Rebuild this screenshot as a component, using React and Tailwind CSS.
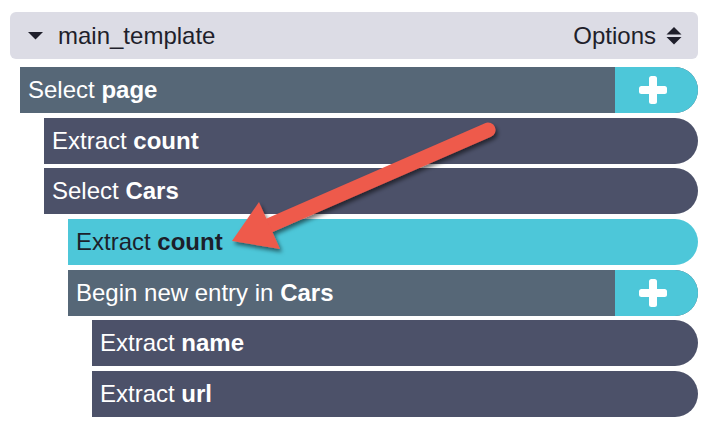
import React from "react";

const Plus = () => (
  <svg width="30" height="30" viewBox="0 0 30 30">
    <rect x="11" y="1" width="8" height="28" rx="2.5" fill="#fff" />
    <rect x="1" y="11" width="28" height="8" rx="2.5" fill="#fff" />
  </svg>
);

function Row({ indent, label, bold, variant, plus }) {
  const bg =
    variant === "teal"
      ? "bg-[#4dc7d9] text-[#1c1f2b]"
      : variant === "slate"
      ? "bg-[#566777] text-white"
      : "bg-[#4c5169] text-white";
  return (
    <div className={`flex h-[46px] ${indent} rounded-l-[5px] rounded-r-full overflow-hidden ${bg}`}>
      <div className="flex-1 flex items-center pl-2 text-[24px] leading-none">
        <span>{label}&nbsp;</span>
        <span className="font-bold">{bold}</span>
      </div>
      {plus && (
        <div className="w-[83px] bg-[#4dc7d9] flex items-center pl-[23px]">
          <Plus />
        </div>
      )}
    </div>
  );
}

export default function App() {
  return (
    <div
      className="relative w-[718px] h-[444px] bg-white overflow-hidden"
      style={{ fontFamily: '"Liberation Sans", Arial, sans-serif' }}
    >
      <div className="ml-[10px] mt-[12px] w-[688px]">
        <div className="h-[47px] rounded-[6px] bg-[#dcdce5] flex items-center pl-[18px] pr-[16px] text-[#1f1f2b]">
          <svg width="15" height="8" viewBox="0 0 15 8">
            <polygon points="0,0 15,0 7.5,7.5" fill="#1f1f2b" />
          </svg>
          <span className="ml-[15px] text-[24px] leading-none">main_template</span>
          <span className="ml-auto text-[24px] leading-none">Options</span>
          <svg className="ml-[10px]" width="16" height="18" viewBox="0 0 16 18">
            <polygon points="8,0 15.5,7.5 0.5,7.5" fill="#1f1f2b" />
            <polygon points="0.5,10 15.5,10 8,17.5" fill="#1f1f2b" />
          </svg>
        </div>
        <div className="mt-[8px] pl-[10px] flex flex-col gap-[4.67px]">
          <Row indent="ml-0" label="Select" bold="page" variant="slate" plus />
          <Row indent="ml-[24px]" label="Extract" bold="count" variant="dark" />
          <Row indent="ml-[24px]" label="Select" bold="Cars" variant="dark" />
          <Row indent="ml-[48px]" label="Extract" bold="count" variant="teal" />
          <Row indent="ml-[48px]" label="Begin new entry in" bold="Cars" variant="slate" plus />
          <Row indent="ml-[72px]" label="Extract" bold="name" variant="dark" />
          <Row indent="ml-[72px]" label="Extract" bold="url" variant="dark" />
        </div>
      </div>
      <svg className="absolute left-0 top-0 pointer-events-none" width="718" height="444">
        <defs>
          <filter id="sh" x="-20%" y="-20%" width="140%" height="140%">
            <feDropShadow dx="2" dy="3" stdDeviation="2" floodColor="#000" floodOpacity="0.55" />
          </filter>
        </defs>
        <g filter="url(#sh)">
          <line x1="488" y1="130" x2="268" y2="226" stroke="#ee5a4c" strokeWidth="15" strokeLinecap="round" />
          <polygon points="232,241 259,202 280,249" fill="#ee5a4c" />
        </g>
      </svg>
    </div>
  );
}
